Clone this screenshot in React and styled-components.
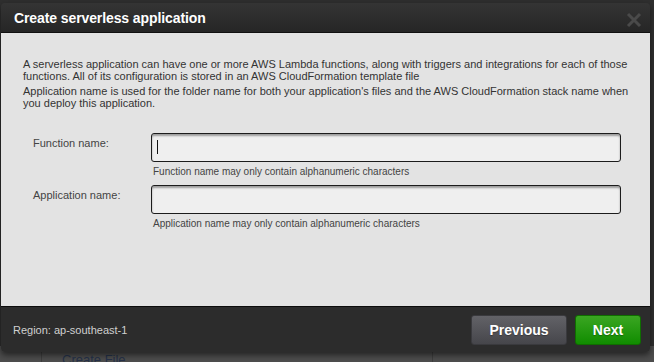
import styled, { createGlobalStyle } from "styled-components";

const Global = createGlobalStyle`
  html, body {
    margin: 0;
    padding: 0;
    background: #2f2f2f;
    overflow: hidden;
  }
  body {
    font-family: "Liberation Sans", Arial, sans-serif;
  }
`;

const Page = styled.div`
  width: 654px;
  height: 362px;
  display: flex;
  flex-direction: column;
  background: #2f2f2f;
  overflow: hidden;
`;

const Dialog = styled.div`
  flex-shrink: 0;
  margin: 3px 4px 0 1px;
  display: flex;
  flex-direction: column;
  border-radius: 4px;
  overflow: hidden;
  box-shadow: 0 3px 6px rgba(0, 0, 0, 0.55);
  position: relative;
  z-index: 1;
`;

const Header = styled.div`
  height: 29px;
  display: flex;
  align-items: center;
  justify-content: space-between;
  padding: 0 8px 0 13px;
  background: linear-gradient(#343434, #262626);
  border-bottom: 1px solid #111;
`;

const Title = styled.h1`
  margin: 0;
  color: #fff;
  font-size: 14px;
  font-weight: bold;
  letter-spacing: -0.1px;
`;

const Close = styled.svg`
  margin-top: 4px;
`;

const Body = styled.div`
  height: 274px;
  box-sizing: border-box;
  background: #e3e3e3;
  padding: 25px 8px 0 22px;
  border-bottom: 1px solid #0c0c0c;
`;

const Intro = styled.p`
  margin: 0 0 3px;
  font-size: 11px;
  line-height: 12px;
  white-space: nowrap;
  color: #333;
`;

const Form = styled.div`
  display: grid;
  grid-template-columns: 107px 470px;
  column-gap: 11px;
  margin-top: 24px;
  margin-left: 10px;
  row-gap: 8px;
`;

const Label = styled.label`
  font-size: 11px;
  color: #444;
  padding-top: 4px;
`;

const Field = styled.div`
  display: flex;
  flex-direction: column;
`;

const Input = styled.input`
  height: 29px;
  box-sizing: border-box;
  border: 1px solid #1c1c1c;
  border-radius: 3px;
  background: #efefef;
  box-shadow: inset 0 2px 2px rgba(0, 0, 0, 0.35);
  padding: 0 6px;
  font-family: inherit;
  font-size: 12px;
  outline: none;
`;

const Caret = styled.span`
  position: absolute;
  left: 6px;
  top: 7px;
  width: 1px;
  height: 14px;
  background: #111;
`;

const InputWrap = styled.div`
  position: relative;
  display: flex;
  flex-direction: column;
`;

const Hint = styled.span`
  margin-top: 4px;
  margin-left: 2px;
  font-size: 10px;
  color: #444;
`;

const Footer = styled.div`
  height: 45px;
  display: flex;
  align-items: center;
  justify-content: space-between;
  padding: 0 9px 0 12px;
  background: #2c2c2c;
`;

const Region = styled.span`
  color: #d0d0d0;
  font-size: 11px;
`;

const Buttons = styled.div`
  display: flex;
  gap: 8px;
`;

const Button = styled.button`
  height: 30px;
  padding: 0;
  width: ${(p) => p.$w}px;
  border-radius: 3px;
  border: 1px solid ${(p) => (p.$green ? "#0f6e00" : "#3a3a3e")};
  background: ${(p) =>
    p.$green
      ? "linear-gradient(#3aa622, #108c00)"
      : "linear-gradient(#626267, #46464b)"};
  color: #fff;
  font-family: "Liberation Sans", Arial, sans-serif;
  font-size: 14px;
  font-weight: bold;
  text-shadow: 0 1px 1px rgba(0, 0, 0, 0.3);
`;

const Behind = styled.div`
  flex: 1;
  min-height: 0;
  display: flex;
  background: #4d4d4d;
  margin-top: -6px;
  padding-left: 41px;
`;

const BehindColumn = styled.div`
  width: 392px;
  box-sizing: border-box;
  border-left: 1px solid #3e3e3e;
  border-right: 1px solid #3e3e3e;
  padding: 6px 0 0 20px;
  color: #26324a;
  font-size: 13px;
`;

export default function App() {
  return (
    <Page>
      <Global />
      <Dialog>
        <Header>
          <Title>Create serverless application</Title>
          <Close width="16" height="16" viewBox="0 0 16 16">
            <path d="M2 2 L14 14 M14 2 L2 14" stroke="#4a4a4a" strokeWidth="3" />
          </Close>
        </Header>
        <Body>
          <Intro>
            A serverless application can have one or more AWS Lambda functions, along with triggers and integrations for each of those
            <br />
            functions. All of its configuration is stored in an AWS CloudFormation template file
          </Intro>
          <Intro>
            Application name is used for the folder name for both your application's files and the AWS CloudFormation stack name when
            <br />
            you deploy this application.
          </Intro>
          <Form>
            <Label>Function name:</Label>
            <Field>
              <InputWrap>
                <Input />
                <Caret />
              </InputWrap>
              <Hint>Function name may only contain alphanumeric characters</Hint>
            </Field>
            <Label>Application name:</Label>
            <Field>
              <Input />
              <Hint>Application name may only contain alphanumeric characters</Hint>
            </Field>
          </Form>
        </Body>
        <Footer>
          <Region>Region: ap-southeast-1</Region>
          <Buttons>
            <Button $w={96}>Previous</Button>
            <Button $w={66} $green>Next</Button>
          </Buttons>
        </Footer>
      </Dialog>
      <Behind>
        <BehindColumn>Create File</BehindColumn>
      </Behind>
    </Page>
  );
}
